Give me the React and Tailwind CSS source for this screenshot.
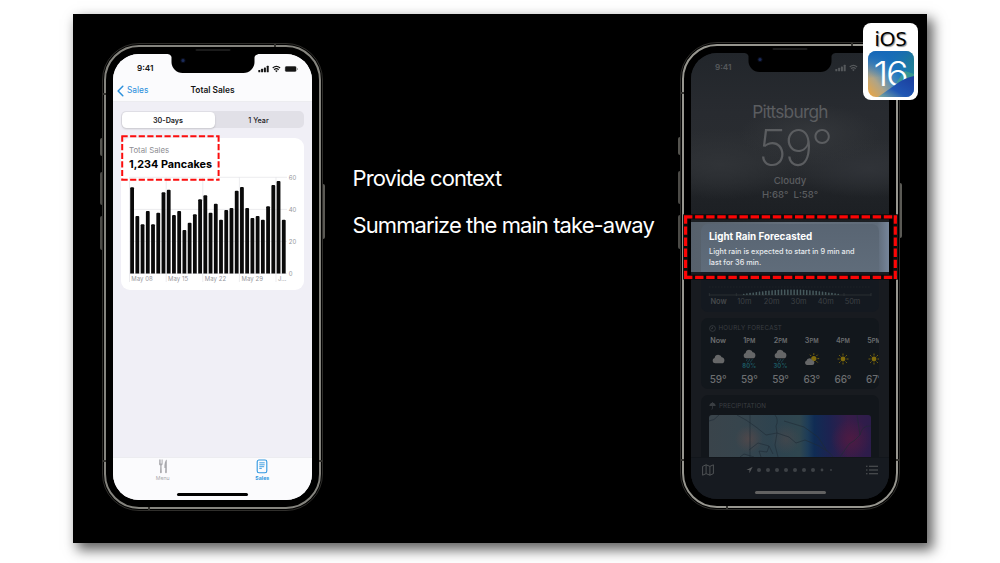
import React from "react";

const BAR_TOPS = [
  187.3, 216, 224.3, 211, 224.3, 212.7, 192.3, 189.7, 215, 211, 230, 222.7, 214.3, 199.3, 195.3,
  212.7, 203.7, 219.7, 210, 208, 190.7, 187, 208, 218, 216, 219.7, 206.3, 185, 181, 219.7,
];

function StatusBar({ color, battery = true }) {
  return (
    <div className={`flex h-[28px] shrink-0 items-center justify-between pl-[24px] pr-[14.5px] pt-[1px] ${color}`}>
      <span className="text-[8.2px] font-semibold leading-none">9:41</span>
      <svg width="40" height="8" viewBox="0 0 40 8" fill="currentColor">
        <rect x="0.3" y="5" width="2" height="2.2" rx="0.5" />
        <rect x="3.1" y="3.8" width="2" height="3.4" rx="0.5" />
        <rect x="5.9" y="2.4" width="2" height="4.8" rx="0.5" />
        <rect x="8.7" y="0.8" width="2" height="6.4" rx="0.5" />
        <g fill="none" stroke="currentColor" strokeWidth="1.2">
          <path d="M14.7 3 Q18.4 -0.2 22.1 3" />
          <path d="M16.1 4.7 Q18.4 2.7 20.7 4.7" />
        </g>
        <path d="M17.1 5.8 Q18.4 4.8 19.7 5.8 L18.4 7.2z" />
        {battery && (
          <>
            <rect x="26.8" y="1.1" width="11.8" height="5.8" rx="1.6" opacity="0.4" />
            <rect x="27.3" y="1.6" width="10.8" height="4.8" rx="1.2" />
            <rect x="39" y="3" width="0.7" height="2" rx="0.3" opacity="0.5" />
          </>
        )}
      </svg>
    </div>
  );
}

function Phone({ children, size, rim }) {
  return (
    <div className={`relative flex h-[468px] shrink-0 rounded-[37px] border border-[#2f2e2b] p-px ${size}`}>
      <div className="absolute -left-[3px] top-[94px] h-[18px] w-[2px] rounded-l bg-[#55544f]" />
      <div className="absolute -left-[3px] top-[128px] h-[33px] w-[2px] rounded-l bg-[#4c4b47]" />
      <div className="absolute -left-[3px] top-[172px] h-[34px] w-[2px] rounded-l bg-[#4c4b47]" />
      <div className="absolute -right-[3px] top-[140px] h-[55px] w-[2px] rounded-r bg-[#5b5a55]" />
      <div className={`flex min-w-0 grow rounded-[35px] border-2 bg-black p-[7px] ${rim}`}>
        <div className="flex min-w-0 grow flex-col overflow-hidden rounded-[26px]">{children}</div>
      </div>
      <div className="absolute left-1/2 top-[9px] h-[20px] w-[83px] -translate-x-1/2 rounded-b-[11px] bg-black">
        <svg className="absolute -left-[4px] top-[1px]" width="91" height="5" viewBox="0 0 91 5" fill="#000">
          <path d="M0 0H5V5Q4.300 .8 0 0zM91 0H86V5Q86.700 .8 91 0z" />
        </svg>
        <div className="absolute left-[9px] top-[5px] flex h-[5px] w-[5px] items-center justify-center rounded-full bg-[#0b0e1c]">
          <div className="h-[3px] w-[3px] rounded-full bg-[#1b2c5c]" />
        </div>
        <div className="absolute -top-[4px] left-[24px] h-[2px] w-[35px] rounded bg-[#1b1b1b]" />
      </div>
      <div className="absolute right-[46px] top-0 h-[3px] w-[2px] bg-[#34332f]" />
      <div className="absolute bottom-0 left-[45px] h-[3px] w-[2px] bg-[#34332f]" />
      <div className="absolute left-0 top-[49px] h-[2px] w-[3px] bg-[#34332f]" />
      <div className="absolute bottom-[48px] left-0 h-[2px] w-[3px] bg-[#34332f]" />
      <div className="absolute bottom-[48px] right-0 h-[2px] w-[3px] bg-[#34332f]" />
    </div>
  );
}

function SalesChart() {
  return (
    <svg width="183" height="116" viewBox="121 174 183 116" className="block font-['Inter']">
      <g stroke="#e4e4e8" strokeWidth="0.7">
        {[177.3, 209.4, 241.4, 273.5].map((y) => (
          <line key={y} x1="129.5" x2="287" y1={y} y2={y} />
        ))}
        {[129.5, 166.2, 202.8, 239.4, 276].map((x) => (
          <line key={x} x1={x} x2={x} y1="177.3" y2="282" />
        ))}
      </g>
      {BAR_TOPS.map((top, i) => (
        <path
          key={i}
          fill="#0a0a0a"
          d={`M${130.2 + i * 5.23} 273.5V${top + 1}q0 -1 1 -1h1.8q1 0 1 1V273.5z`}
        />
      ))}
      <g fill="#96969b" fontSize="6" letterSpacing="0.05">
        <text x="288.7" y="179.7">60</text>
        <text x="288.7" y="211.8">40</text>
        <text x="288.7" y="243.7">20</text>
        <text x="288.7" y="275.6">0</text>
        <text x="131.3" y="281">May 08</text>
        <text x="168" y="281">May 15</text>
        <text x="204.8" y="281">May 22</text>
        <text x="241.5" y="281">May 29</text>
        <text x="278" y="281">J…</text>
      </g>
    </svg>
  );
}

function SalesScreen() {
  return (
    <div className="flex grow flex-col bg-[#f0eff6]">
      <div className="border-b border-[#ececf0] bg-[#fbfbfd]">
        <StatusBar color="text-[#141414]" />
        <div className="grid h-[19px] grid-cols-[1fr_auto_1fr] items-center px-[4px] pb-[2px] leading-none">
          <div className="flex items-center gap-[3px] text-[#2a8fdc]">
            <svg width="7" height="12" viewBox="0 0 7 12" fill="none" stroke="currentColor" strokeWidth="1.5" strokeLinecap="round" strokeLinejoin="round">
              <path d="M5.8 1.2 1.1 6l4.7 4.8" />
            </svg>
            <span className="text-[8.4px]">Sales</span>
          </div>
          <span className="text-[8.4px] font-semibold text-[#141414]">Total Sales</span>
        </div>
      </div>
      <div className="flex grow flex-col px-[8px] pt-[9px]">
        <div className="flex h-[17px] rounded-[5px] bg-[#e1e0e7] p-[0.5px] text-center text-[7.2px] leading-[17px] text-[#1c1c1e]">
          <div className="w-[93px] rounded-[4.5px] bg-white font-semibold shadow-[0_1px_2px_rgba(0,0,0,0.18)]">30-Days</div>
          <div className="w-[88px] font-medium">1 Year</div>
        </div>
        <div className="relative mt-[10px] flex h-[152px] flex-col rounded-[9px] bg-white">
          <div className="h-[36px] pl-[8px] pt-[6px]">
            <div className="h-[12px] text-[7.8px] leading-[12px] text-[#8e8e93]">Total Sales</div>
            <div className="h-[16px] whitespace-nowrap text-[10.8px] font-bold leading-[17px] text-black">1,234 Pancakes</div>
          </div>
          <SalesChart />
          <svg className="absolute -left-[1px] -top-[4px]" width="102" height="50" viewBox="0 0 102 50" fill="none" stroke="#fb0d0d" strokeWidth="2" strokeDasharray="6.2 2.4">
            <path d="M1.5 2.3H99.5M98.6 1.5V46.8M1.5 45.7H99.5M2.2 1.5V46.8" />
          </svg>
        </div>
      </div>
      <div className="flex h-[43px] flex-col items-center border-t border-[#ececf0] bg-[#fbfbfd]">
        <div className="grid h-[34px] w-full shrink-0 grid-cols-2 pt-[1px] text-center text-[5.2px] leading-[7px]">
          <div className="flex flex-col items-center text-[#a9a9ad]">
            <svg width="12" height="15" viewBox="0 0 12 15" fill="currentColor">
              <path d="M2 .5h.8v4h.6v-4h.8v4h.6v-4h.8v4.3Q5.6 6.3 4.5 6.6L4.8 13.2Q4.8 14.2 3.9 14.2T3 13.2L3.3 6.6Q2 6.3 2 4.8z" />
              <path d="M9.8.5V13.2Q9.8 14.2 9 14.2T8.1 13.2L8.3 9H7.4Q7.2 2 9.8.5z" />
            </svg>
            <span className="pt-[1px]">Menu</span>
          </div>
          <div className="flex flex-col items-center text-[#2f97e0]">
            <svg width="12" height="15" viewBox="0 0 12 15" fill="none" stroke="currentColor" strokeWidth="1.1">
              <rect x="1.2" y="1" width="9.6" height="12.8" rx="1.8" />
              <path strokeWidth="0.9" d="M3.3 3.8H8.7M3.3 5.8H8.7M3.3 7.7H8.2M3.3 9.4H5.8" />
            </svg>
            <span className="pt-[1px] font-bold">Sales</span>
          </div>
        </div>
        <div className="mt-[1px] h-[2.6px] w-[71px] rounded-full bg-black" />
      </div>
    </div>
  );
}

function Cloud({ className = "" }) {
  return (
    <svg className={className} width="13" height="10" viewBox="0 0 13 10" fill="#666768">
      <path d="M3.2 9.3A2.7 2.7 0 0 1 2.6 4Q3.2.8 6.2.8 8.9.8 9.7 3.3 12.4 3.5 12.4 6.4 12.2 9.3 9.5 9.3z" />
    </svg>
  );
}

function Sun() {
  return (
    <svg width="12" height="12" viewBox="-6 -6 12 12" fill="#806b0c" stroke="#806b0c" strokeWidth="0.9" strokeLinecap="round">
      <circle r="2.4" stroke="none" />
      <path d="M0-3.9V-5.1M0 3.9V5.1M3.9 0H5.1M-3.9 0H-5.1M2.8-2.8 3.6-3.6M-2.8-2.8-3.6-3.6M2.8 2.8 3.6 3.6M-2.8 2.8-3.6 3.6" />
    </svg>
  );
}

function PartlySunny() {
  return (
    <svg width="16" height="13" viewBox="0 0 16 13">
      <g transform="translate(9.8 5.6)" fill="#806b0c" stroke="#806b0c" strokeWidth="0.9" strokeLinecap="round">
        <circle r="2.6" stroke="none" />
        <path d="M0-4V-5M4 0H5M2.9-2.9 3.6-3.6M-2.9-2.9-3.6-3.6M2.9 2.9 3.6 3.6" />
      </g>
      <path fill="#666768" d="M2.8 12A2.2 2.2 0 0 1 2.4 7.8Q3 5.2 5.4 5.2 7.6 5.2 8.2 7.3 10.4 7.4 10.4 9.7 10.2 12 8.2 12z" />
    </svg>
  );
}

function Rain({ chance }) {
  return (
    <div className="flex flex-col items-center">
      <Cloud className="-mt-px" />
      <svg width="9" height="4" viewBox="0 0 9 4" stroke="#1e535f" strokeWidth="0.8" strokeLinecap="round">
        <path d="M2 .5 1.5 1.5M4.6.5 4.1 1.5M7.2.5 6.7 1.5M3.2 2.4 2.8 3.2M5.900 2.4 5.5 3.2" />
      </svg>
      <span className="text-[5.800px] font-bold leading-[6px] tracking-[0.2px] text-[#1c5660]">{chance}</span>
    </div>
  );
}

const HOURS = [
  { time: "Now", icon: <Cloud />, temp: "59°" },
  { time: "1", pm: true, icon: <Rain chance="80%" />, temp: "59°" },
  { time: "2", pm: true, icon: <Rain chance="30%" />, temp: "59°" },
  { time: "3", pm: true, icon: <PartlySunny />, temp: "63°" },
  { time: "4", pm: true, icon: <Sun />, temp: "66°" },
  { time: "5", pm: true, icon: <Sun />, temp: "67°" },
];

function HourlyCard() {
  return (
    <div className="mt-[6px] h-[71px] shrink-0 overflow-hidden rounded-[7px] bg-[#12171c] pl-[1.5px] pt-[5px]">
      <div className="flex h-[10px] items-center gap-[2.5px] pl-[6.5px] text-[6.2px] tracking-[0.25px] text-[#3a3e42]">
        <svg width="7" height="7" viewBox="0 0 7 7" fill="none" stroke="currentColor" strokeWidth="0.8">
          <circle cx="3.5" cy="3.5" r="2.9" />
          <path d="M3.5 1.8V3.6H2" />
        </svg>
        HOURLY FORECAST
      </div>
      <div className="flex">
        {HOURS.map((h, i) => (
          <div key={i} className="flex w-[31.2px] shrink-0 flex-col items-center text-[#6c6e70]">
            <div className="h-[15px] text-[7.2px] font-semibold leading-[15px]">
              {h.time}
              {h.pm && <span className="text-[5.8px]">PM</span>}
            </div>
            <div className="flex h-[22px] items-center">{h.icon}</div>
            <div className="h-[16px] text-[10px] font-medium leading-[18px] tracking-[-0.2px]">{h.temp}</div>
          </div>
        ))}
      </div>
    </div>
  );
}

function RainTimeline() {
  const ticks = Array.from({ length: 31 }, (_, i) => i);
  return (
    <svg width="178" height="40" viewBox="701 272 178 40" className="block shrink-0 rounded-b-[7px] bg-[#141920] font-['Inter']">
      <line x1="709" x2="871" y1="287" y2="287" stroke="#22282d" strokeWidth="0.6" strokeDasharray="1.5 1.5" />
      <path d="M709 295H871M709.3 293V296M736.3 293V296M763.3 293V296M844 293V296M871 293V296" stroke="#30363a" strokeWidth="0.7" />
      {ticks.map((i) => {
        const h = 1 + 4.6 * Math.sin((Math.PI * (i + 0.5)) / 31);
        return <rect key={i} x={743 + i * 3.15} y={295 - h} width="1.5" height={h} rx="0.5" fill="#46595c" />;
      })}
      <g fill="#3d4145" fontSize="7.4" textAnchor="middle">
        <text x="718.5" y="304" fontWeight="600" fill="#46494c">Now</text>
        <text x="744.3" y="304">10m</text>
        <text x="771.7" y="304">20m</text>
        <text x="798.7" y="304">30m</text>
        <text x="825.7" y="304">40m</text>
        <text x="852.5" y="304">50m</text>
      </g>
    </svg>
  );
}

function PrecipitationCard() {
  return (
    <div className="mt-[6px] flex grow flex-col overflow-hidden rounded-t-[7px] bg-[#12161b] px-[8px] pt-[6px]">
      <div className="flex h-[10px] items-center gap-[3px] text-[6.2px] tracking-[0.1px] text-[#3a3e42]">
        <svg width="7" height="8" viewBox="0 0 7 8">
          <path d="M.3 4Q.6 1 3.5.8 6.4 1 6.7 4z" fill="currentColor" />
          <path d="M3.5 0V6.5Q3.5 7.4 2.4 7.2" fill="none" stroke="currentColor" strokeWidth="0.7" />
        </svg>
        PRECIPITATION
      </div>
      <svg width="162" height="42" viewBox="0 0 162 42" className="mt-[4px] block shrink-0">
        <defs>
          <linearGradient id="rainMap">
            <stop offset="0" stopColor="#3a444b" />
            <stop offset="0.18" stopColor="#37454d" />
            <stop offset="0.4" stopColor="#2e434f" />
            <stop offset="0.56" stopColor="#2f464f" />
            <stop offset="0.61" stopColor="#1d3c58" />
            <stop offset="0.65" stopColor="#102c54" />
            <stop offset="0.74" stopColor="#1c2351" />
            <stop offset="0.86" stopColor="#371c49" />
            <stop offset="1" stopColor="#2c1c4b" />
          </linearGradient>
          <radialGradient id="warmSpot">
            <stop offset="0" stopColor="#5a4949" stopOpacity="0.7" />
            <stop offset="1" stopColor="#5a4949" stopOpacity="0" />
          </radialGradient>
          <radialGradient id="heavyRain">
            <stop offset="0" stopColor="#4d1b43" />
            <stop offset="1" stopColor="#4d1b43" stopOpacity="0" />
          </radialGradient>
        </defs>
        <path d="M0 42V3Q0 0 3 0H159Q162 0 162 3V42z" fill="url(#rainMap)" />
        <circle cx="40" cy="24" r="14" fill="url(#warmSpot)" />
        <circle cx="77" cy="24" r="15" fill="url(#warmSpot)" opacity="0.6" />
        <circle cx="142" cy="24" r="20" fill="url(#heavyRain)" />
        <g fill="none" stroke="#202b36" strokeWidth="0.6">
          <path d="M41 0V42M0 6Q5 6 10 0M28 0Q38 5 47 12L57 20 68 18 80 22 87 28 96 25 110 31 121 38 124 42" />
          <path d="M66 0Q70 5 67 11L68 18 66 30 69 42M75 6 95 12 109 22 118 36M162 11Q153 10 151 20 146 26 140 29L131 42" />
          <path d="M40 35 49 28 60 31 58 37 50 36 52 42M60 31 64 39M148 0 151 20M31 42 35 39 45 42" />
        </g>
      </svg>
    </div>
  );
}

function WeatherScreen() {
  return (
    <div className="flex min-w-0 grow flex-col bg-[#181b20]">
      <div className="flex h-[169px] shrink-0 flex-col bg-[radial-gradient(ellipse_70px_30px_at_60%_48%,#34373b_0%,transparent_100%),radial-gradient(ellipse_80px_35px_at_15%_66%,#303337_0%,transparent_100%),radial-gradient(ellipse_80px_30px_at_90%_68%,#303338_0%,transparent_100%),linear-gradient(180deg,#22262b_0%,#282b30_35%,#2a2d31_65%,#1f2226_84%,#1c1f23_100%)]">
        <StatusBar color="text-[#55585b]" battery={false} />
        <div className="flex flex-col items-center pt-[20px] text-[#5b5d60]">
          <div className="h-[22px] text-[17.3px] leading-[22px] tracking-[-0.75px]">Pittsburgh</div>
          <div className="flex h-[50px] pl-[9px] text-[50px] font-extralight leading-[50px] tracking-[-2.6px]">59°</div>
          <div className="mt-[1px] h-[14px] text-[9.6px] font-medium leading-[14px]">Cloudy</div>
          <div className="h-[14px] whitespace-pre text-[9.6px] font-medium leading-[14px]">H:68°  L:58°</div>
        </div>
      </div>
      <div className="flex h-[50px] shrink-0 flex-col overflow-hidden bg-[linear-gradient(90deg,#56606b_0%,#65707c_50%,#5f6b79_94%,#76859a_100%)] px-[10px] pt-[2px]">
        <div className="h-[60px] shrink-0 rounded-t-[7px] bg-[linear-gradient(180deg,#596573_0%,#616e7c_100%)] pl-[8px] pt-[6px] text-white">
          <div className="h-[14px] whitespace-nowrap text-[9.8px] font-bold leading-[14px]">Light Rain Forecasted</div>
          <div className="mt-[3px] whitespace-nowrap text-[7.3px] font-medium leading-[10.6px] text-[#e6e9ed]">
            Light rain is expected to start in 9 min and
            <br />
            last for 36 min.
          </div>
        </div>
      </div>
      <div className="flex min-h-0 grow flex-col overflow-hidden px-[10px]">
        <RainTimeline />
        <HourlyCard />
        <PrecipitationCard />
      </div>
      <div className="flex h-[42px] shrink-0 flex-col items-center border-t border-[#12161b] bg-[#161a20] text-[#55585a]">
        <div className="flex h-[23px] w-full items-center justify-between px-[11px]">
          <svg width="12" height="12" viewBox="0 0 12 12" fill="none" stroke="currentColor" strokeWidth="0.9" strokeLinejoin="round">
            <path d="M.6 2.4 4.1.8 7.9 2.4 11.4.8V9.6L7.9 11.2 4.1 9.6.6 11.2zM4.1.8V9.6M7.9 2.4V11.2" />
          </svg>
          <svg width="88" height="8" viewBox="0 0 88 8" fill="currentColor">
            <path d="M6.7.8.4 4.1H3.4V7.2z" />
            {[0, 1, 2, 3, 4, 5, 6].map((i) => (
              <circle key={i} cx={13 + i * 9} cy="4" r="2" opacity="0.65" />
            ))}
            <circle cx="76" cy="4" r="1.4" opacity="0.65" />
            <circle cx="85" cy="4" r="0.9" opacity="0.65" />
          </svg>
          <svg width="12" height="10" viewBox="0 0 12 10" fill="none" stroke="currentColor" strokeWidth="1.1">
            <path d="M0 1.2H1.5M3 1.2H12M0 5H1.5M3 5H12M0 8.8H1.5M3 8.8H12" />
          </svg>
        </div>
        <div className="mt-[10px] h-[2.6px] w-[71px] shrink-0 rounded-full bg-[#626262]" />
      </div>
    </div>
  );
}

function IosBadge() {
  return (
    <div className="absolute left-[790px] top-[9px] flex h-[77px] w-[55px] flex-col items-center rounded-[8px] bg-white pt-[3px]">
      <div className="h-[24px] font-['Noto_Sans','Liberation_Sans',sans-serif] text-[20.5px] leading-[24px] tracking-[-0.2px] text-black [text-shadow:1px_1px_1px_rgba(0,0,0,0.45)]">
        iOS
      </div>
      <svg width="46" height="46" viewBox="0 0 46 46" className="mt-[1px] block shrink-0 font-['Inter']">
        <defs>
          <linearGradient id="tile" x1="0" y1="0.9" x2="1" y2="0.1">
            <stop offset="0" stopColor="#e5a64a" />
            <stop offset="0.22" stopColor="#b0a486" />
            <stop offset="0.42" stopColor="#4f8dbb" />
            <stop offset="0.62" stopColor="#1b75c0" />
            <stop offset="0.8" stopColor="#1f80a0" />
            <stop offset="1" stopColor="#2a8f6b" />
          </linearGradient>
          <linearGradient id="tileTop" x1="0.3" y1="0" x2="0.45" y2="1">
            <stop offset="0" stopColor="#1668b8" />
            <stop offset="0.55" stopColor="#1668b8" stopOpacity="0" />
          </linearGradient>
          <linearGradient id="wave" x1="1" y1="0" x2="0" y2="1">
            <stop offset="0" stopColor="#1b3c9c" />
            <stop offset="0.6" stopColor="#2057b4" />
            <stop offset="1" stopColor="#7fae9f" />
          </linearGradient>
          <clipPath id="tileClip">
            <rect width="46" height="46" rx="8" />
          </clipPath>
        </defs>
        <g clipPath="url(#tileClip)">
          <rect width="46" height="46" fill="url(#tile)" />
          <rect width="46" height="46" fill="url(#tileTop)" />
          <path d="M27 35Q33 23 37 20L46 23V34z" fill="#4fae7d" opacity="0.55" />
          <text x="5.5" y="35" fontSize="34" fontWeight="300" fill="#fff" letterSpacing="-2" textLength="33" lengthAdjust="spacingAndGlyphs">16</text>
          <path d="M10 46Q20 39 27 34 37 26.500 46 25V46z" fill="url(#wave)" />
        </g>
      </svg>
    </div>
  );
}

export default function App() {
  return (
    <div className="h-[563px] w-[1000px] overflow-hidden bg-white pl-[73px] pt-[14px] font-['Inter','Liberation_Sans',sans-serif]">
      <div className="relative flex h-[529px] w-[854px] items-start bg-black pl-[29px] shadow-[5px_6px_12px_1px_rgba(0,0,0,0.62)]">
        <div className="mt-[29px]">
          <Phone size="w-[221px]" rim="border-[#85847e]">
            <SalesScreen />
          </Phone>
        </div>
        <div className="ml-[29.5px] mt-[152px] flex w-[327.5px] shrink-0 flex-col gap-[23px] whitespace-nowrap text-[22px] leading-[24px] tracking-[-0.92px] text-white">
          <p>Provide context</p>
          <p>Summarize the main take-away</p>
        </div>
        <div className="mt-[28px]">
          <Phone size="w-[220px]" rim="border-[#97968f]">
            <WeatherScreen />
          </Phone>
        </div>
        <svg className="absolute left-[609px] top-[199px]" width="217" height="68" viewBox="682 213 217 68" fill="none">
          <rect x="685.6" y="216.8" width="209.8" height="60.4" stroke="#0b0b0b" strokeWidth="5" />
          <path d="M684 216.9H897M684 277.4H897M685.6 215.3V279M895.3 215.3V279" stroke="#fb0505" strokeWidth="3.2" strokeDasharray="8.4 2.7" />
        </svg>
        <IosBadge />
      </div>
    </div>
  );
}
